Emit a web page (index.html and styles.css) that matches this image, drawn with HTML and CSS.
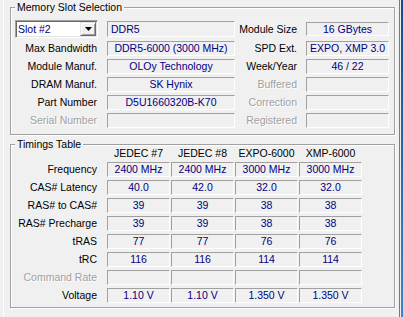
FILE: index.html
```html
<!DOCTYPE html>
<html>
<head>
<meta charset="utf-8">
<link rel="stylesheet" href="styles.css">
</head>
<body>
<div class="window">
  <div class="tabpage">
    <section class="group slot">
      <div class="group-title">Memory Slot Selection</div>
      <div class="slot-grid">
        <div class="combo">
          <span class="combo-text">Slot #2</span>
          <span class="combo-btn"><svg width="7" height="4" viewBox="0 0 7 4"><polygon points="0,0 7,0 3.5,4" fill="#000"/></svg></span>
        </div>
        <div class="field tall left">DDR5</div>
        <div class="label">Module Size</div>
        <div class="field short">16 GBytes</div>

        <div class="label">Max Bandwidth</div>
        <div class="field">DDR5-6000 (3000 MHz)</div>
        <div class="label">SPD Ext.</div>
        <div class="field">EXPO, XMP 3.0</div>

        <div class="label">Module Manuf.</div>
        <div class="field">OLOy Technology</div>
        <div class="label">Week/Year</div>
        <div class="field">46 / 22</div>

        <div class="label">DRAM Manuf.</div>
        <div class="field">SK Hynix</div>
        <div class="label dim">Buffered</div>
        <div class="field"></div>

        <div class="label">Part Number</div>
        <div class="field">D5U1660320B-K70</div>
        <div class="label dim">Correction</div>
        <div class="field"></div>

        <div class="label dim">Serial Number</div>
        <div class="field"></div>
        <div class="label dim">Registered</div>
        <div class="field"></div>
      </div>
    </section>

    <section class="group timings">
      <div class="group-title">Timings Table</div>
      <div class="timing-grid">
        <div></div>
        <div class="head">JEDEC #7</div>
        <div class="head">JEDEC #8</div>
        <div class="head">EXPO-6000</div>
        <div class="head">XMP-6000</div>

        <div class="label">Frequency</div>
        <div class="field">2400 MHz</div>
        <div class="field">2400 MHz</div>
        <div class="field">3000 MHz</div>
        <div class="field">3000 MHz</div>

        <div class="label">CAS# Latency</div>
        <div class="field">40.0</div>
        <div class="field">42.0</div>
        <div class="field">32.0</div>
        <div class="field">32.0</div>

        <div class="label">RAS# to CAS#</div>
        <div class="field">39</div>
        <div class="field">39</div>
        <div class="field">38</div>
        <div class="field">38</div>

        <div class="label">RAS# Precharge</div>
        <div class="field">39</div>
        <div class="field">39</div>
        <div class="field">38</div>
        <div class="field">38</div>

        <div class="label">tRAS</div>
        <div class="field">77</div>
        <div class="field">77</div>
        <div class="field">76</div>
        <div class="field">76</div>

        <div class="label">tRC</div>
        <div class="field">116</div>
        <div class="field">116</div>
        <div class="field">114</div>
        <div class="field">114</div>

        <div class="label dim">Command Rate</div>
        <div class="field"></div>
        <div class="field"></div>
        <div class="field"></div>
        <div class="field"></div>

        <div class="label">Voltage</div>
        <div class="field">1.10 V</div>
        <div class="field">1.10 V</div>
        <div class="field">1.350 V</div>
        <div class="field">1.350 V</div>
      </div>
    </section>
  </div>
  <div class="edge"></div>
</div>
</body>
</html>
```
FILE: styles.css
```css
html, body {
  margin: 0;
  padding: 0;
  background: #f0f0f0;
}

body {
  font-family: "Liberation Sans", Arial, sans-serif;
  font-size: 10.5px;
  color: #000;
  width: 403px;
  height: 317px;
  overflow: hidden;
}

.window {
  display: flex;
  width: 403px;
  height: 317px;
}

.tabpage {
  box-sizing: border-box;
  margin-left: 3px;
  width: 397px;
  height: 317px;
  border-left: 1px solid #fff;
  border-right: 1px solid #7a7a7a;
  display: flex;
  flex-direction: column;
}

.edge {
  margin-left: 1px;
  width: 2px;
  height: 317px;
  background: linear-gradient(#1b4a86, #2b6fb5 60%, #3a86c8);
}

.group {
  box-sizing: border-box;
  width: 385px;
  margin-left: 6px;
  border: 1px solid #a0a0a0;
  box-shadow: inset 1px 1px 0 #fff, 1px 1px 0 #fff;
  padding: 0 5px 0 4px;
}

.slot {
  margin-top: 7px;
  padding-bottom: 6px;
}

.timings {
  margin-top: 9px;
  padding-bottom: 4px;
}

.group-title {
  display: table;
  margin-top: -7px;
  padding: 0 2px;
  line-height: 13px;
  height: 13px;
  background: #f0f0f0;
}

.slot-grid {
  margin-top: 6px;
  display: grid;
  grid-template-columns: 92px 128px 71px 83px;
  grid-template-rows: 18px;
  grid-auto-rows: 15px;
  row-gap: 3px;
}

.timing-grid {
  margin-top: -4px;
  display: grid;
  grid-template-columns: 91px repeat(4, 63px);
  grid-template-rows: 12px;
  grid-auto-rows: 15px;
  column-gap: 1px;
  row-gap: 3px;
}

.label {
  line-height: 15px;
  text-align: right;
  white-space: nowrap;
  align-self: center;
}

.slot-grid .label {
  padding-right: 10px;
}

.slot-grid .label:nth-child(4n+3) {
  padding-right: 9px;
}

.timing-grid .label {
  padding-right: 9px;
}

.dim {
  color: #a0a0a0;
  text-shadow: 1px 1px 0 #fff;
}

.head {
  line-height: 12px;
  text-align: center;
  white-space: nowrap;
}

.field {
  box-sizing: border-box;
  height: 15px;
  line-height: 13px;
  text-align: center;
  color: #000080;
  white-space: nowrap;
  overflow: hidden;
  border: 1px solid;
  border-color: #a0a0a0 #fff #fff #a0a0a0;
  align-self: center;
}

.field.tall {
  height: 16px;
  line-height: 14px;
}

.field.short {
  height: 14px;
  line-height: 12px;
}

.field.left {
  text-align: left;
  padding-left: 3px;
}

.combo {
  box-sizing: border-box;
  width: 83px;
  height: 18px;
  display: flex;
  align-items: stretch;
  padding: 1px;
  background: #fff;
  border: 1px solid;
  border-color: #a0a0a0 #fff #fff #a0a0a0;
  box-shadow: inset 1px 1px 0 #696969, inset -1px -1px 0 #e3e3e3;
}

.combo-text {
  flex: 1;
  padding-left: 1px;
  line-height: 14px;
  color: #000080;
  white-space: nowrap;
}

.combo-btn {
  box-sizing: border-box;
  width: 16px;
  display: flex;
  align-items: center;
  justify-content: center;
  background: #f0f0f0;
  border: 1px solid;
  border-color: #e3e3e3 #696969 #696969 #e3e3e3;
  box-shadow: inset 1px 1px 0 #fff, inset -1px -1px 0 #a0a0a0;
}

.combo-btn svg {
  display: block;
}
```
